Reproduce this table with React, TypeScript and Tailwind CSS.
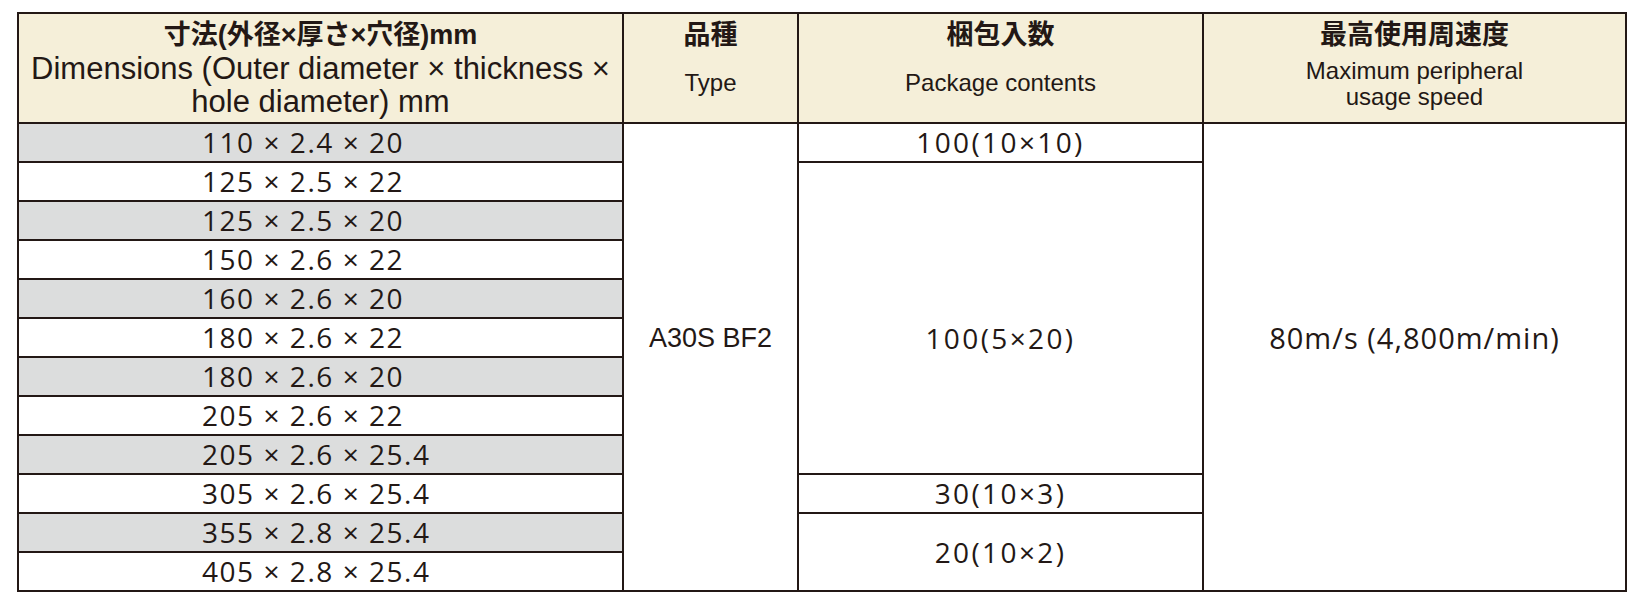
import React from "react";

const dims = [
  "110 × 2.4 × 20",
  "125 × 2.5 × 22",
  "125 × 2.5 × 20",
  "150 × 2.6 × 22",
  "160 × 2.6 × 20",
  "180 × 2.6 × 22",
  "180 × 2.6 × 20",
  "205 × 2.6 × 22",
  "205 × 2.6 × 25.4",
  "305 × 2.6 × 25.4",
  "355 × 2.8 × 25.4",
  "405 × 2.8 × 25.4",
];

const cell = "border-r-2 border-b-2 border-[#231815]";
const jpBold = "font-['Liberation_Sans','Noto_Sans_CJK_JP',sans-serif] font-bold text-[27px] leading-[33px]";
const enHead = "font-['Liberation_Sans',Arial,sans-serif] text-[24px] leading-[26px]";
const num = "font-['Open_Sans',sans-serif] font-normal text-[28px] leading-[37px] tracking-[0.055em] whitespace-nowrap";
const pkg = "font-['Open_Sans',sans-serif] font-normal text-[28px] leading-[37px] tracking-[0.085em] whitespace-nowrap";

export default function App() {
  const body: React.ReactNode[] = [];
  dims.forEach((d, i) => {
    body.push(
      <div
        key={"d" + i}
        className={`${cell} flex items-center pl-[183px] ${i % 2 === 0 ? "bg-[#dcdddd]" : "bg-white"}`}
      >
        <span className={num}>{d}</span>
      </div>
    );
    if (i === 0) {
      body.push(
        <div key="type" className={`${cell} row-span-12 flex items-center justify-center pb-[38px]`}>
          <span className="font-['Liberation_Sans',Arial,sans-serif] text-[27px]">A30S BF2</span>
        </div>
      );
      body.push(
        <div key="p1" className={`${cell} flex items-center justify-center`}>
          <span className={pkg}>100(10×10)</span>
        </div>
      );
      body.push(
        <div key="speed" className={`${cell} row-span-12 flex items-center justify-center pb-[38px]`}>
          <span className="font-['Open_Sans',sans-serif] font-normal text-[29px] tracking-[0.035em] whitespace-nowrap">
            80m/s (4,800m/min)
          </span>
        </div>
      );
    }
    if (i === 1) {
      body.push(
        <div key="p2" className={`${cell} row-span-8 flex items-center justify-center pt-[40px]`}>
          <span className={pkg}>100(5×20)</span>
        </div>
      );
    }
    if (i === 9) {
      body.push(
        <div key="p3" className={`${cell} flex items-center justify-center`}>
          <span className={pkg}>30(10×3)</span>
        </div>
      );
    }
    if (i === 10) {
      body.push(
        <div key="p4" className={`${cell} row-span-2 flex items-center justify-center`}>
          <span className={pkg}>20(10×2)</span>
        </div>
      );
    }
  });

  return (
    <div className="min-h-screen bg-white pt-[12px] pl-[17px] text-[#231815]">
      <div className="grid w-fit grid-cols-[605px_175px_405px_423px] grid-rows-[110px_repeat(12,39px)] border-t-2 border-l-2 border-[#231815]">
        <div className={`${cell} bg-[#f5efd9] flex flex-col items-center pt-[5px] text-center`}>
          <div className={jpBold}>寸法(外径×厚さ×穴径)mm</div>
          <div className="font-['Liberation_Sans',Arial,sans-serif] text-[31px] leading-[33px] whitespace-nowrap">
            Dimensions (Outer diameter × thickness ×
          </div>
          <div className="font-['Liberation_Sans',Arial,sans-serif] text-[31px] leading-[33px] whitespace-nowrap">
            hole diameter) mm
          </div>
        </div>
        <div className={`${cell} bg-[#f5efd9] flex flex-col items-center pt-[5px] text-center`}>
          <div className={jpBold}>品種</div>
          <div className={`${enHead} mt-[18px]`}>Type</div>
        </div>
        <div className={`${cell} bg-[#f5efd9] flex flex-col items-center pt-[5px] text-center`}>
          <div className={jpBold}>梱包入数</div>
          <div className={`${enHead} mt-[18px]`}>Package contents</div>
        </div>
        <div className={`${cell} bg-[#f5efd9] flex flex-col items-center pt-[5px] text-center`}>
          <div className={jpBold}>最高使用周速度</div>
          <div className={`${enHead} mt-[6px]`}>Maximum peripheral</div>
          <div className={enHead}>usage speed</div>
        </div>
        {body}
      </div>
    </div>
  );
}
